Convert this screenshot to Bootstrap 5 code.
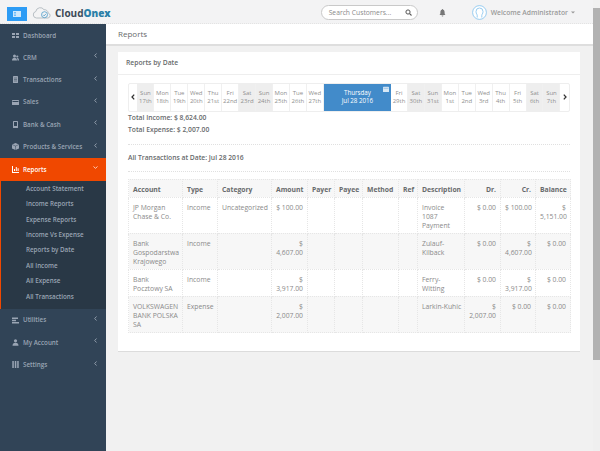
<!DOCTYPE html>
<html lang="en"><head><meta charset="utf-8"><title>Reports by Date</title>
<link rel="stylesheet" href="https://cdn.jsdelivr.net/npm/bootstrap@5.3.0/dist/css/bootstrap.min.css">
<style>
html,body{height:451px;overflow:hidden}
body{font-family:"Open Sans",sans-serif;font-size:6.75px;color:#676a6c;background:#f1f1f1;line-height:9.3px}
.shell{height:451px}
.mainarea{width:593px}
.sbar{width:7px;background:#efefef}
.sbar-up{height:8px;background:#f1f1f1}
.sbar-thumb{height:352px;background:#b2b2b2}
.topbar{height:24px;background:#f3f3f4;border-bottom:1px dotted #e3e3e3}
.menu-btn{width:20px;height:14px;background:#2d9cf5;margin:7px 0 0 7px}
.logo-wrap{margin:6px 0 0 5px}
.brand{font-size:10px;font-weight:700;color:#3d4a57;margin-left:3px;line-height:12px}
.brand b{color:#2a7fa8}
.search-wrap{margin-top:5px}
.searchbox{width:97px;height:15px;border:1px solid #c9c9c9;border-radius:8px;background:#fff;margin-right:21px;padding:0 5px 0 7px;font-size:6.75px;color:#8a8a8a}
.avatar{margin-left:26px}
.welcome{font-size:6.75px;font-weight:600;color:#9a9a9a;margin-left:4px}
.caretmark{margin-left:3px;margin-right:18px}
.sidenav{width:106px;background:#314457;height:427px;flex:none}
.side-item{height:22.3px;padding-left:12px;padding-right:8px;color:#9aa5b4;font-weight:600;font-size:6.25px}
.side-item svg.ico{width:7px;height:7px;margin-right:4px;flex:none}
.side-item svg.chev{width:3px;height:5px;margin-left:auto;margin-right:1px;margin-top:-3px;flex:none}
.side-item.on{background:#f04800;color:#fff;height:23px}
.side-item.on svg.chev{width:5px;height:3px;margin-right:0}
.subwrap{background:#293846;border-left:1px solid #f04800;padding-bottom:5px}
.sub-item{height:15.4px;padding-left:25px;color:#9aa5b4;font-weight:600;font-size:6.25px}
.pagebar{height:22px;background:#fff;border-bottom:2px solid #dedede;padding-left:12px;font-size:8px;color:#676a6c}
.panel-box{margin:6px 0 0 12px;width:462px;height:300px;background:#fff;border-bottom:1px solid #dcdcdc}
.panel-head{height:23px;padding-left:8px;border-bottom:1px solid #eee;font-weight:600;font-size:6.75px;color:#676a6c}
.panel-body{padding:8px 10px 0}
.dayrow{height:28.5px;border:1px solid #eee;border-radius:2px}
.dayarrow{width:8.5px}
.daycell{width:17px;text-align:center;color:#8f8f8f;font-size:6px;line-height:8.2px;border-right:1px solid #f0f0f0}
.daycell.we{background:#eee}
.daycell.pick{width:67.5px;background:#428bca;color:#fff;position:relative;border:0;font-size:6.2px}
.calmark{position:absolute;right:2px;top:2px;width:6px;height:6px}
.totals{font-weight:600;line-height:12px;font-size:6.75px}
.rule{border-top:1px dotted #e0e0e0;height:0}
.rule-a{margin-top:8px}
.rule-b{margin-top:7px;margin-bottom:7px}
.totals-gap{margin-top:7px}
.tbl{table-layout:fixed;width:442px;margin:0;border-collapse:collapse;font-size:6.8px;line-height:9.2px}
.tbl th,.tbl td{border:1px dotted #e6e6e6;padding:5px 4px 2.5px;vertical-align:top;background:#fff;color:#8a8a8a;box-shadow:none}
.tbl th{color:#676a6c;font-weight:700;padding:5px 4px 3px;background:repeating-conic-gradient(#f2f2f2 0 25%,#fbfbfb 0 50%) 0 0/2px 2px}
.tbl tr.alt td{background:repeating-conic-gradient(#f2f2f2 0 25%,#fbfbfb 0 50%) 0 0/2px 2px}
.rgt{text-align:right}
.hr1{height:35.5px}.hr2{height:36px}.hr3{height:27px}.hr4{height:35px}
</style></head><body>
<svg width="0" height="0" class="d-block position-absolute"><defs>
<symbol id="cl" viewBox="0 0 3 5"><path d="M2.500.5L.7 2.500l1.800 2" fill="none" stroke="#9aa5b4" stroke-width=".9"/></symbol>
</defs></svg>
<div class="shell d-flex">
<div class="mainarea d-flex flex-column">
<div class="topbar d-flex align-items-start">
  <div class="menu-btn d-flex align-items-center justify-content-center"><svg width="8" height="6" viewBox="0 0 8 6"><rect width="8" height="6" fill="#cfe8fc"/><path d="M1 1.500h2M1 3h2M1 4.500h2" stroke="#2d9cf5" stroke-width=".6"/></svg></div>
  <div class="logo-wrap d-flex align-items-center">
    <svg width="20" height="13" viewBox="0 0 20 13"><path d="M4.500 12a3.300 3.300 0 0 1-.7-6.500A4.500 4.500 0 0 1 12 3.700a3.700 3.700 0 0 1 4.200 3.400A2.500 2.500 0 0 1 16 12z" fill="none" stroke="#aab2b9" stroke-width=".8"/><circle cx="12.500" cy="8.700" r="3" fill="none" stroke="#4b9bc9" stroke-width=".8"/><path d="M11 8.700l1.200 1.200 1.700-2" fill="none" stroke="#4b9bc9" stroke-width=".8"/></svg>
    <span class="brand">Cloud<b>Onex</b></span>
  </div>
  <div class="search-wrap ms-auto d-flex align-items-center">
    <div class="searchbox d-flex align-items-center justify-content-between"><span>Search Customers...</span><svg width="7" height="7" viewBox="0 0 7 7"><circle cx="3" cy="3" r="2.100" fill="none" stroke="#555" stroke-width="1"/><path d="M4.600 4.600L6.500 6.500" stroke="#555" stroke-width="1.100"/></svg></div>
    <svg width="7" height="8" viewBox="0 0 7 8"><path d="M3.500 0a.6.6 0 0 1 .6.7C5.300 1 5.600 2 5.600 3.400c0 1.500.4 2 1.100 2.700H.3C1 5.400 1.400 4.900 1.400 3.400 1.400 2 1.700 1 2.900.7A.6.6 0 0 1 3.500 0zM2.600 6.600h1.800a.9.9 0 0 1-1.800 0z" fill="#777"/></svg>
    <svg class="avatar" width="15" height="15" viewBox="0 0 15 15"><circle cx="7.500" cy="7.500" r="6.900" fill="#fff" stroke="#7fc0ee" stroke-width=".8"/><path d="M5.200 12.500v-2.200c0-1-1.200-1.400-1.200-3.800a3.500 3.500 0 0 1 7 0c0 2.400-1.200 2.800-1.200 3.800v2.200" fill="none" stroke="#7fc0ee" stroke-width=".8"/></svg>
    <span class="welcome">Welcome Administrator</span>
    <svg class="caretmark" width="4" height="3" viewBox="0 0 4 3"><path d="M0 .5h4L2 2.500z" fill="#999"/></svg>
  </div>
</div>
<div class="d-flex flex-grow-1">
<nav class="sidenav">
  <div class="side-item d-flex align-items-center"><svg class="ico" viewBox="0 0 7 7"><path d="M0 1h3v2H0zM4 1h3v2H4zM0 4h3v2H0zM4 4h3v2H4z" fill="#9aa5b4"/></svg><span>Dashboard</span></div>
  <div class="side-item d-flex align-items-center"><svg class="ico" viewBox="0 0 7 7"><circle cx="2.500" cy="2" r="1.500" fill="#9aa5b4"/><circle cx="5.300" cy="2.500" r="1.100" fill="#9aa5b4"/><path d="M0 6.500c0-2 1-2.800 2.500-2.800S5 4.500 5 6.500zM5.500 6.500c0-1.200-.2-2-.7-2.600 1.400-.2 2.200.8 2.200 2.600z" fill="#9aa5b4"/></svg><span>CRM</span><svg class="chev"><use href="#cl"/></svg></div>
  <div class="side-item d-flex align-items-center"><svg class="ico" viewBox="0 0 7 7"><rect x="1" width="5" height="7" rx=".6" fill="#9aa5b4"/><path d="M2 2h3M2 3.500h3M2 5h3" stroke="#314457" stroke-width=".5"/></svg><span>Transactions</span><svg class="chev"><use href="#cl"/></svg></div>
  <div class="side-item d-flex align-items-center"><svg class="ico" viewBox="0 0 7 7"><rect y="1" width="7" height="5" rx=".6" fill="#9aa5b4"/><path d="M.5 2.500h6" stroke="#314457"/></svg><span>Sales</span><svg class="chev"><use href="#cl"/></svg></div>
  <div class="side-item d-flex align-items-center"><svg class="ico" viewBox="0 0 7 7"><rect x="1" width="5" height="7" rx=".6" fill="#9aa5b4"/><rect x="2" y="1" width="3" height="4" fill="#314457"/></svg><span>Bank &amp; Cash</span><svg class="chev"><use href="#cl"/></svg></div>
  <div class="side-item d-flex align-items-center"><svg class="ico" viewBox="0 0 7 7"><path d="M3.500 0l3.500 1.500v4L3.500 7 0 5.500v-4z" fill="#9aa5b4"/><path d="M0 1.500l3.500 1.500L7 1.500M3.500 3v4" stroke="#314457" stroke-width=".5" fill="none"/></svg><span>Products &amp; Services</span><svg class="chev"><use href="#cl"/></svg></div>
  <div class="side-item on d-flex align-items-center"><svg class="ico" viewBox="0 0 7 7"><path d="M0 0v7h7V6H1V0zM2 5V3h1v2zM3.800 5V1h1v4zM5.600 5V2.200h1V5z" fill="#fff"/></svg><span>Reports</span><svg class="chev" viewBox="0 0 5 3"><path d="M.5.5l2 1.800L4.500.5" fill="none" stroke="#ffd9c8" stroke-width=".9"/></svg></div>
  <div class="subwrap">
    <div class="sub-item d-flex align-items-center">Account Statement</div>
    <div class="sub-item d-flex align-items-center">Income Reports</div>
    <div class="sub-item d-flex align-items-center">Expense Reports</div>
    <div class="sub-item d-flex align-items-center">Income Vs Expense</div>
    <div class="sub-item d-flex align-items-center">Reports by Date</div>
    <div class="sub-item d-flex align-items-center">All Income</div>
    <div class="sub-item d-flex align-items-center">All Expense</div>
    <div class="sub-item d-flex align-items-center">All Transactions</div>
  </div>
  <div class="side-item d-flex align-items-center"><svg class="ico" viewBox="0 0 7 7"><path d="M0 .5h6v1.500H0zM0 2.800h4v1.500H0zM0 5h7v1.500H0z" fill="#9aa5b4"/></svg><span>Utilities</span><svg class="chev"><use href="#cl"/></svg></div>
  <div class="side-item d-flex align-items-center"><svg class="ico" viewBox="0 0 7 7"><circle cx="3.500" cy="1.800" r="1.600" fill="#9aa5b4"/><path d="M.5 6.800c0-2 1-3 3-3s3 1 3 3z" fill="#9aa5b4"/></svg><span>My Account</span><svg class="chev"><use href="#cl"/></svg></div>
  <div class="side-item d-flex align-items-center"><svg class="ico" viewBox="0 0 7 7"><path d="M.3 0h1.500v7H.3zM2.800 0h1.500v7H2.800zM5.200 0h1.500v7H5.200z" fill="#9aa5b4"/></svg><span>Settings</span><svg class="chev"><use href="#cl"/></svg></div>
</nav>
<main class="flex-grow-1">
  <div class="pagebar d-flex align-items-center">Reports</div>
  <div class="panel-box">
    <div class="panel-head d-flex align-items-center">Reports by Date</div>
    <div class="panel-body">
      <div class="dayrow d-flex align-items-stretch">
        <div class="dayarrow d-flex align-items-center justify-content-center"><svg width="4" height="6" viewBox="0 0 4 6"><path d="M3.200.6L1 3l2.200 2.400" fill="none" stroke="#333" stroke-width="1.300"/></svg></div>
        <div class="daycell we d-flex flex-column justify-content-center"><span>Sun</span><span>17th</span></div>
        <div class="daycell d-flex flex-column justify-content-center"><span>Mon</span><span>18th</span></div>
        <div class="daycell d-flex flex-column justify-content-center"><span>Tue</span><span>19th</span></div>
        <div class="daycell d-flex flex-column justify-content-center"><span>Wed</span><span>20th</span></div>
        <div class="daycell d-flex flex-column justify-content-center"><span>Thu</span><span>21st</span></div>
        <div class="daycell d-flex flex-column justify-content-center"><span>Fri</span><span>22nd</span></div>
        <div class="daycell we d-flex flex-column justify-content-center"><span>Sat</span><span>23rd</span></div>
        <div class="daycell we d-flex flex-column justify-content-center"><span>Sun</span><span>24th</span></div>
        <div class="daycell d-flex flex-column justify-content-center"><span>Mon</span><span>25th</span></div>
        <div class="daycell d-flex flex-column justify-content-center"><span>Tue</span><span>26th</span></div>
        <div class="daycell d-flex flex-column justify-content-center"><span>Wed</span><span>27th</span></div>
        <div class="daycell pick d-flex flex-column justify-content-center"><span>Thursday</span><span>Jul 28 2016</span><svg class="calmark" viewBox="0 0 6 6"><rect y=".8" width="6" height="5.200" rx=".6" fill="#d8e8f5"/><path d="M.5 2.300h5" stroke="#428bca" stroke-width=".4"/></svg></div>
        <div class="daycell d-flex flex-column justify-content-center"><span>Fri</span><span>29th</span></div>
        <div class="daycell we d-flex flex-column justify-content-center"><span>Sat</span><span>30th</span></div>
        <div class="daycell we d-flex flex-column justify-content-center"><span>Sun</span><span>31st</span></div>
        <div class="daycell d-flex flex-column justify-content-center"><span>Mon</span><span>1st</span></div>
        <div class="daycell d-flex flex-column justify-content-center"><span>Tue</span><span>2nd</span></div>
        <div class="daycell d-flex flex-column justify-content-center"><span>Wed</span><span>3rd</span></div>
        <div class="daycell d-flex flex-column justify-content-center"><span>Thu</span><span>4th</span></div>
        <div class="daycell d-flex flex-column justify-content-center"><span>Fri</span><span>5th</span></div>
        <div class="daycell we d-flex flex-column justify-content-center"><span>Sat</span><span>6th</span></div>
        <div class="daycell we d-flex flex-column justify-content-center"><span>Sun</span><span>7th</span></div>
        <div class="dayarrow d-flex align-items-center justify-content-center"><svg width="4" height="6" viewBox="0 0 4 6"><path d="M.8.6L3 3 .8 5.400" fill="none" stroke="#333" stroke-width="1.300"/></svg></div>
      </div>
      <div class="totals">Total Income: $ 8,624.00</div>
      <div class="totals">Total Expense: $ 2,007.00</div>
      <div class="rule rule-a"></div>
      <div class="totals totals-gap">All Transactions at Date: Jul 28 2016</div>
      <div class="rule rule-b"></div>
      <table class="table tbl">
        <colgroup><col style="width:54px"><col style="width:35px"><col style="width:54px"><col style="width:36px"><col style="width:27px"><col style="width:28px"><col style="width:36px"><col style="width:19px"><col style="width:47px"><col style="width:36px"><col style="width:35px"><col style="width:35px"></colgroup>
        <thead><tr><th>Account</th><th>Type</th><th>Category</th><th>Amount</th><th>Payer</th><th>Payee</th><th>Method</th><th>Ref</th><th>Description</th><th class="rgt">Dr.</th><th class="rgt">Cr.</th><th class="rgt">Balance</th></tr></thead>
        <tbody>
        <tr class="hr1"><td>JP Morgan Chase &amp; Co.</td><td>Income</td><td>Uncategorized</td><td class="rgt">$ 100.00</td><td></td><td></td><td></td><td></td><td>Invoice 1087 Payment</td><td class="rgt">$ 0.00</td><td class="rgt text-nowrap">$ 100.00</td><td class="rgt">$ 5,151.00</td></tr>
        <tr class="alt hr2"><td>Bank Gospodarstwa Krajowego</td><td>Income</td><td></td><td class="rgt">$ 4,607.00</td><td></td><td></td><td></td><td></td><td>Zulauf-Kilback</td><td class="rgt">$ 0.00</td><td class="rgt">$ 4,607.00</td><td class="rgt">$ 0.00</td></tr>
        <tr class="hr3"><td>Bank Pocztowy SA</td><td>Income</td><td></td><td class="rgt">$ 3,917.00</td><td></td><td></td><td></td><td></td><td>Ferry-Witting</td><td class="rgt">$ 0.00</td><td class="rgt">$ 3,917.00</td><td class="rgt">$ 0.00</td></tr>
        <tr class="alt hr4"><td>VOLKSWAGEN BANK POLSKA SA</td><td>Expense</td><td></td><td class="rgt">$ 2,007.00</td><td></td><td></td><td></td><td></td><td class="text-nowrap">Larkin-Kuhic</td><td class="rgt">$ 2,007.00</td><td class="rgt">$ 0.00</td><td class="rgt">$ 0.00</td></tr>
        </tbody>
      </table>
    </div>
  </div>
</main>
</div>
</div>
<div class="sbar"><div class="sbar-up"></div><div class="sbar-thumb"></div></div>
</div>
<script src="https://cdn.jsdelivr.net/npm/bootstrap@5.3.0/dist/js/bootstrap.bundle.min.js"></script>
</body></html>
